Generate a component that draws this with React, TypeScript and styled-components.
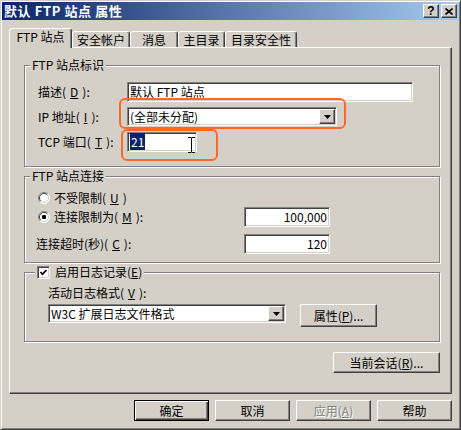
import React from 'react'
import styled, { createGlobalStyle, css } from 'styled-components'

const GlobalStyle = createGlobalStyle`
  html, body { margin:0; padding:0; background:#D4D0C8; }
  body {
    font-family: "Noto Sans CJK SC", "Noto Sans", sans-serif;
    font-size:12px;
    color:#000;
  }
  * { box-sizing:border-box; }
`

const raised = css`
  border:1px solid;
  border-color:#fff #404040 #404040 #fff;
  box-shadow: inset -1px -1px 0 #808080;
  background:#D4D0C8;
`

const sunken = css`
  border:1px solid;
  border-color:#808080 #fff #fff #808080;
  box-shadow: inset 1px 1px 0 #404040, inset -1px -1px 0 #D4D0C8;
  background:#fff;
`

const Window = styled.div`
  width:461px;
  height:430px;
  display:flex;
  flex-direction:column;
  padding:1px;
  background:#D4D0C8;
  border:1px solid;
  border-color:#D4D0C8 #404040 #404040 #D4D0C8;
  box-shadow: inset 1px 1px 0 #fff, inset -1px -1px 0 #808080;
`

const TitleBar = styled.div`
  height:18px;
  flex:none;
  display:flex;
  align-items:center;
  justify-content:space-between;
  padding:0 2px 0 2px;
  background:linear-gradient(to right, #0A246A, #A6CAF0);
  color:#fff;
  font-weight:bold;
  font-size:13px;
  letter-spacing:0.6px;
  line-height:14px;
  white-space:pre;
`

const CaptionButtons = styled.div`
  display:flex;
  gap:2px;
`

const CaptionButton = styled.div`
  ${raised}
  width:16px;
  height:14px;
  display:flex;
  align-items:center;
  justify-content:center;
  color:#000;
  font-family:"Liberation Sans", sans-serif;
  font-size:12px;
  font-weight:bold;
  letter-spacing:0;
`

const Body = styled.div`
  flex:1;
  display:flex;
  flex-direction:column;
  padding:8px 7px 7px 7px;
`

const TabStrip = styled.div`
  height:19px;
  flex:none;
  display:flex;
  align-items:flex-end;
`

const Tab = styled.div<{ $w: number; $active?: boolean }>`
  width:${p => p.$w}px;
  height:${p => (p.$active ? 20 : 16)}px;
  margin-bottom:${p => (p.$active ? -1 : 0)}px;
  padding-bottom:${p => (p.$active ? 3 : 0)}px;
  position:relative;
  z-index:${p => (p.$active ? 1 : 0)};
  display:flex;
  align-items:center;
  justify-content:center;
  background:#D4D0C8;
  border:1px solid;
  border-bottom:none;
  border-color:#fff #404040 transparent #fff;
  box-shadow: inset -1px 0 0 #808080;
  border-radius:3px 3px 0 0;
  line-height:14px;
  white-space:pre;
`

const Panel = styled.div`
  flex:1;
  display:flex;
  flex-direction:column;
  padding:17px 11px 0 14px;
  border:1px solid;
  border-color:#fff #404040 #404040 #fff;
  box-shadow: inset -1px -1px 0 #808080;
`

const Group = styled.div<{ $pad: string; $mt?: number }>`
  position:relative;
  margin-top:${p => p.$mt ?? 0}px;
  padding:${p => p.$pad};
  border:1px solid #808080;
  box-shadow: inset 1px 1px 0 #fff, 1px 1px 0 #fff;
`

const Legend = styled.div<{ $x: number }>`
  position:absolute;
  top:-8px;
  left:${p => p.$x}px;
  padding:0 2px;
  height:14px;
  display:flex;
  align-items:center;
  gap:5px;
  background:#D4D0C8;
  line-height:14px;
  white-space:pre;
`

const Row = styled.div<{ $h: number; $mt?: number; $top?: boolean }>`
  height:${p => p.$h}px;
  margin-top:${p => p.$mt ?? 0}px;
  display:flex;
  align-items:${p => (p.$top ? 'flex-start' : 'center')};
`

const Label = styled.div<{ $w?: number; $indent?: number }>`
  width:${p => (p.$w ? `${p.$w}px` : 'auto')};
  flex:none;
  padding-left:${p => p.$indent ?? 0}px;
  display:flex;
  align-items:center;
  gap:4px;
  line-height:14px;
  white-space:pre;
`

const Field = styled.div<{ $w: number; $h: number }>`
  ${sunken}
  position:relative;
  width:${p => p.$w}px;
  height:${p => p.$h}px;
  flex:none;
  padding:1px;
  display:flex;
  align-items:center;
  line-height:14px;
`

const FieldText = styled.span<{ $right?: boolean }>`
  flex:1;
  padding:${p => (p.$right ? '0 1px 0 0' : '0 0 0 1px')};
  text-align:${p => (p.$right ? 'right' : 'left')};
  white-space:pre;
`

const Selected = styled.span`
  background:#0A246A;
  color:#fff;
  padding:0 1px;
`

const DropButton = styled.div`
  ${raised}
  width:16px;
  height:100%;
  flex:none;
  display:flex;
  align-items:center;
  justify-content:center;
`

const Annotation = styled.span<{ $t: number; $r: number; $b: number; $l: number }>`
  position:absolute;
  top:${p => p.$t}px;
  right:${p => p.$r}px;
  bottom:${p => p.$b}px;
  left:${p => p.$l}px;
  border:2px solid #FF6A28;
  border-radius:6px;
  pointer-events:none;
`

const Cursor = styled.svg`
  position:absolute;
  left:60px;
  top:4px;
`

const CheckBox = styled.span`
  ${sunken}
  width:13px;
  height:13px;
  display:flex;
  align-items:center;
  justify-content:center;
`

const Button = styled.div<{ $w: number; $h?: number; $default?: boolean; $disabled?: boolean; $ml?: number }>`
  ${raised}
  width:${p => p.$w}px;
  height:${p => p.$h ?? 21}px;
  margin-left:${p => p.$ml ?? 0}px;
  flex:none;
  display:flex;
  align-items:center;
  justify-content:center;
  line-height:14px;
  white-space:pre;
  color:${p => (p.$disabled ? '#808080' : '#000')};
  text-shadow:${p => (p.$disabled ? '1px 1px 0 #fff' : 'none')};
  ${p =>
    p.$default &&
    css`
      border:1px solid #000;
      box-shadow: inset 1px 1px 0 #fff, inset -1px -1px 0 #404040, inset -2px -2px 0 #808080;
    `}
`

const SessionRow = styled.div`
  margin-top:10px;
  display:flex;
  justify-content:flex-end;
`

const Footer = styled.div`
  margin-top:6px;
  display:flex;
  justify-content:flex-end;
  gap:6px;
`

const Arrow = () => (
  <svg width="7" height="4" viewBox="0 0 7 4">
    <polygon points="0,0 7,0 3.5,4" fill="#000" />
  </svg>
)

const Radio = ({ checked }: { checked?: boolean }) => (
  <svg width="12" height="12" viewBox="0 0 12 12">
    <circle cx="6" cy="6" r="5.5" fill="#fff" />
    <path d="M2.1 9.9 A5.5 5.5 0 0 1 9.9 2.1" stroke="#808080" fill="none" />
    <path d="M9.9 2.1 A5.5 5.5 0 0 1 2.1 9.9" stroke="#fff" fill="none" />
    <path d="M2.8 9.2 A4.5 4.5 0 0 1 9.2 2.8" stroke="#404040" fill="none" />
    <path d="M9.2 2.8 A4.5 4.5 0 0 1 2.8 9.2" stroke="#D4D0C8" fill="none" />
    {checked && <rect x="4" y="4" width="4" height="4" rx="1.2" fill="#000" />}
  </svg>
)

const Combo = ({ w, h, text }: { w: number; h: number; text: string }) => (
  <Field $w={w} $h={h}>
    <FieldText>{text}</FieldText>
    <DropButton>
      <Arrow />
    </DropButton>
  </Field>
)

const App = () => {
  return (
    <>
      <GlobalStyle />
      <Window>
        <TitleBar>
          <span>默认 FTP 站点 属性</span>
          <CaptionButtons>
            <CaptionButton>?</CaptionButton>
            <CaptionButton>
              <svg width="8" height="7" viewBox="0 0 8 7">
                <path d="M0.5 0.5 L7.5 6.5 M7.5 0.5 L0.5 6.5" stroke="#000" strokeWidth="1.6" />
              </svg>
            </CaptionButton>
          </CaptionButtons>
        </TitleBar>

        <Body>
          <TabStrip>
            <Tab $w={63} $active>FTP 站点</Tab>
            <Tab $w={58}>安全帐户</Tab>
            <Tab $w={48}>消息</Tab>
            <Tab $w={47}>主目录</Tab>
            <Tab $w={72}>目录安全性</Tab>
          </TabStrip>

          <Panel>
            <Group $pad="16px 0 14px 13px">
              <Legend $x={5}>FTP 站点标识</Legend>
              <Row $h={20}>
                <Label $w={89}>描述(<u>D</u>):</Label>
                <Field $w={286} $h={20}>
                  <FieldText>默认 FTP 站点</FieldText>
                </Field>
              </Row>
              <Row $h={19} $mt={5}>
                <Label $w={89}>IP 地址(<u>I</u>):</Label>
                <div style={{ position: 'relative' }}>
                  <Combo w={210} h={19} text="(全部未分配)" />
                  <Annotation $t={-9} $r={-9} $b={-3} $l={-8} />
                </div>
              </Row>
              <Row $h={20} $mt={6}>
                <Label $w={89}>TCP 端口(<u>T</u>):</Label>
                <Field $w={70} $h={20}>
                  <FieldText>
                    <Selected>21</Selected>
                  </FieldText>
                  <Annotation $t={-4} $r={-22} $b={-10} $l={-7} />
                  <Cursor width="7" height="16" viewBox="0 0 7 16">
                    <path d="M0 0.5 H3 M4 0.5 H7 M3.5 1 V15 M0 15.5 H3 M4 15.5 H7 M3 1 H4 M3 15 H4" stroke="#000" fill="none" />
                  </Cursor>
                </Field>
              </Row>
            </Group>

            <Group $pad="13px 0 8px 11px" $mt={9}>
              <Legend $x={5}>FTP 站点连接</Legend>
              <Row $h={16}>
                <Label $w={208} $indent={2}>
                  <Radio />
                  不受限制(<u>U</u>)
                </Label>
              </Row>
              <Row $h={20} $mt={1}>
                <Label $w={208} $indent={2}>
                  <Radio checked />
                  连接限制为(<u>M</u>):
                </Label>
                <Field $w={86} $h={20}>
                  <FieldText $right>100,000</FieldText>
                </Field>
              </Row>
              <Row $h={20} $mt={7}>
                <Label $w={208}>连接超时(秒)(<u>C</u>):</Label>
                <Field $w={86} $h={20}>
                  <FieldText $right>120</FieldText>
                </Field>
              </Row>
            </Group>

            <Group $pad="13px 0 14px 23px" $mt={9}>
              <Legend $x={10}>
                <CheckBox>
                  <svg width="9" height="9" viewBox="0 0 9 9">
                    <polyline points="1.5,4 3.5,6.2 7.5,2" stroke="#000" strokeWidth="1.7" fill="none" />
                  </svg>
                </CheckBox>
                <span>启用日志记录(<u>E</u>)</span>
              </Legend>
              <Row $h={14}>
                <Label>活动日志格式(<u>V</u>):</Label>
              </Row>
              <Row $h={23} $mt={4} $top>
                <Combo w={238} h={19} text="W3C 扩展日志文件格式" />
                <Button $w={77} $h={23} $ml={14}>属性(<u>P</u>)...</Button>
              </Row>
            </Group>

            <SessionRow>
              <Button $w={107}>当前会话(<u>R</u>)...</Button>
            </SessionRow>
          </Panel>

          <Footer>
            <Button $w={75} $default>确定</Button>
            <Button $w={75}>取消</Button>
            <Button $w={75} $disabled>应用(<u>A</u>)</Button>
            <Button $w={75}>帮助</Button>
          </Footer>
        </Body>
      </Window>
    </>
  )
}

export default App
